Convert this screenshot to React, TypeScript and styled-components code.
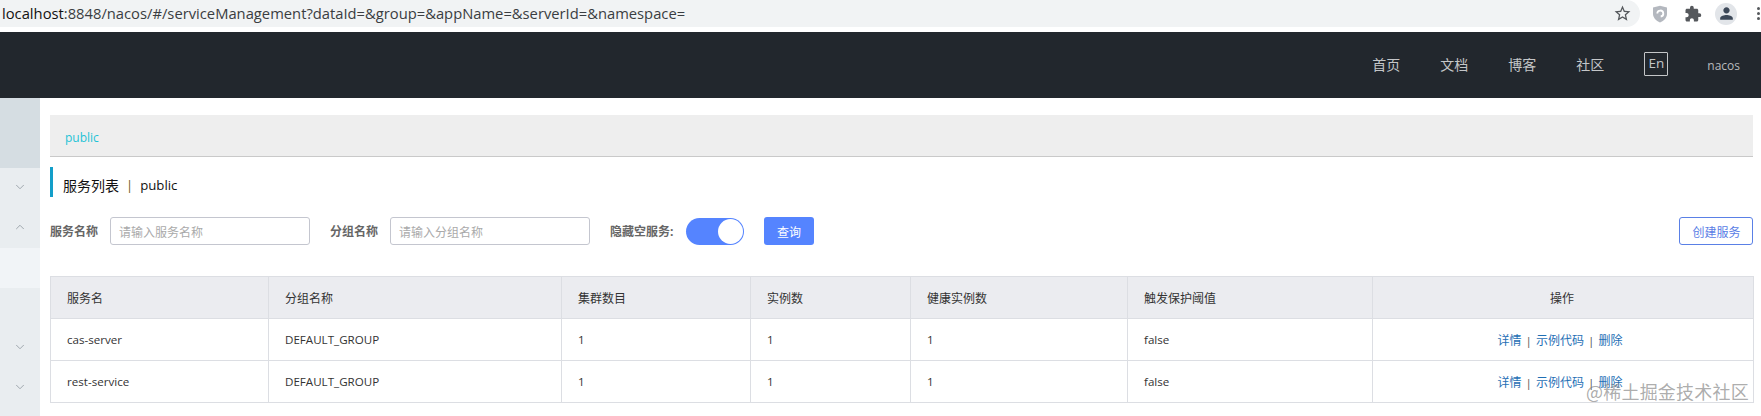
import React from 'react';
import styled, { createGlobalStyle } from 'styled-components';
import { ChevronDown, ChevronUp } from 'lucide-react';
import { MdExtension, MdPerson, MdStarBorder } from 'react-icons/md';

const GlobalStyle = createGlobalStyle`
  html, body {
    margin: 0;
    padding: 0;
    background: #fff;
    overflow: hidden;
    font-family: "Open Sans", "Noto Sans CJK SC", sans-serif;
  }
  * { box-sizing: border-box; }
`;

const Page = styled.div`
  width: 1761px;
  height: 416px;
  position: relative;
  overflow: hidden;
`;

/* browser chrome */
const BrowserBar = styled.div`
  height: 32px;
  display: flex;
  align-items: flex-start;
  background: #fff;
`;

const UrlPill = styled.div`
  width: 1640px;
  height: 27px;
  flex: none;
  display: flex;
  align-items: center;
  justify-content: space-between;
  padding: 0 8px 0 2px;
  background: #f1f3f4;
  border-radius: 0 14px 14px 0;
`;

const UrlText = styled.span`
  font-size: 14.75px;
  line-height: 27px;
  color: #3a3d41;
  white-space: nowrap;
`;

const UrlHost = styled.span`
  color: #111;
`;

const BrowserIcons = styled.div`
  flex: 1;
  height: 27px;
  display: flex;
  align-items: center;
  color: #55585c;
  padding-left: 12px;
  gap: 16px;
`;

const Avatar = styled.div`
  width: 22px;
  height: 22px;
  margin-left: -3px;
  border-radius: 50%;
  background: #e2e5e9;
  color: #3c4858;
  display: flex;
  align-items: center;
  justify-content: center;
`;

const Kebab = styled.div`
  display: flex;
  flex-direction: column;
  gap: 2px;
  margin-left: 4px;
  span {
    width: 3px;
    height: 3px;
    border-radius: 50%;
    background: #55585c;
  }
`;

/* nacos header */
const Header = styled.header`
  height: 66px;
  background: #22272d;
  display: flex;
  align-items: center;
  justify-content: flex-end;
  padding-right: 21px;
  color: #c4c6c8;
`;

const NavLink = styled.a`
  font-size: 14px;
  margin-right: 40px;
  line-height: 20px;
`;

const LangBox = styled.div`
  width: 24px;
  height: 24px;
  margin: -2px 39px 0 0;
  border: 1px solid #c4c6c8;
  border-radius: 1px;
  font-size: 13.5px;
  line-height: 20px;
  text-align: center;
`;

const UserName = styled.span`
  font-size: 12px;
  font-weight: 400;
  color: #b8babd;
`;

const Body = styled.div`
  display: flex;
  height: 318px;
`;

const Sidebar = styled.aside`
  width: 40px;
  flex: none;
  display: flex;
  flex-direction: column;
  background: #e9edf0;
`;

const SideTop = styled.div`
  height: 70px;
  background: #d5dde2;
`;

const SideRow = styled.div<{ $light?: boolean }>`
  height: 40px;
  display: flex;
  align-items: center;
  justify-content: center;
  padding-bottom: 2px;
  color: #8f989f;
  background: ${(p) => (p.$light ? '#f1f4f7' : 'transparent')};
`;

const Main = styled.main`
  flex: 1;
  min-width: 0;
  padding: 17px 8px 0 10px;
`;

const Crumb = styled.div`
  height: 42px;
  padding: 7px 0 0 15px;
  background: #eee;
  border-bottom: 1px solid #c9c9c9;
  font-size: 12px;
  line-height: 32px;
  color: #1fc3d6;
`;

const Title = styled.div`
  height: 30px;
  margin-top: 10px;
  padding: 5px 0 0 10px;
  border-left: 3px solid #139ec9;
  display: flex;
  align-items: center;
  gap: 7px;
  font-size: 14px;
  color: #111;
`;

const TitlePublic = styled.span`
  font-size: 13.2px;
`;

const TitleSep = styled.span`
  color: #6e5a1e;
  font-size: 13px;
`;

const FilterRow = styled.div`
  height: 28px;
  margin-top: 20px;
  display: flex;
  align-items: center;
`;

const FilterLabel = styled.label<{ $width: number }>`
  width: ${(p) => p.$width}px;
  flex: none;
  font-size: 12px;
  font-weight: 700;
  color: #666;
  white-space: nowrap;
`;

const FilterInput = styled.input<{ $gap: number }>`
  width: 200px;
  height: 28px;
  flex: none;
  margin-right: ${(p) => p.$gap}px;
  padding: 0 8px;
  border: 1px solid #c4c6cf;
  border-radius: 3px;
  background: #fff;
  outline: none;
  font: 12px "Noto Sans CJK SC", sans-serif;
  &::placeholder { color: #aaa; }
`;

const Switch = styled.div`
  width: 58px;
  height: 27px;
  flex: none;
  display: flex;
  justify-content: flex-end;
  border-radius: 14px;
  background: #5584ff;
  padding: 1px;
`;

const SwitchKnob = styled.span`
  width: 25px;
  height: 25px;
  border-radius: 50%;
  background: #fff;
`;

const SearchButton = styled.button`
  width: 50px;
  height: 28px;
  margin-left: 20px;
  border: 0;
  border-radius: 3px;
  background: #5584ff;
  color: #fff;
  font: 12px "Noto Sans CJK SC", sans-serif;
`;

const CreateButton = styled.button`
  width: 74px;
  height: 28px;
  margin-left: auto;
  padding: 0 0 0 1px;
  border: 1px solid #5a80e6;
  border-radius: 3px;
  background: #fff;
  color: #5a80e6;
  font: 12px "Noto Sans CJK SC", sans-serif;
`;

const Table = styled.table`
  width: 1703px;
  margin-top: 31px;
  border-collapse: collapse;
  table-layout: fixed;
  font-size: 11.6px;
  color: #333;
`;

const Th = styled.th<{ $center?: boolean }>`
  height: 42px;
  padding: 0 ${(p) => (p.$center ? '18px' : '16px')} 0 16px;
  border: 1px solid #dcdee3;
  background: #ebecf0;
  font-size: 12px;
  font-weight: 400;
  text-align: ${(p) => (p.$center ? 'center' : 'left')};
`;

const Td = styled.td<{ $center?: boolean }>`
  height: 42px;
  padding: 0 ${(p) => (p.$center ? '22px' : '16px')} 0 16px;
  border: 1px solid #dcdee3;
  text-align: ${(p) => (p.$center ? 'center' : 'left')};
`;

const ActionLink = styled.a`
  font-size: 12px;
  color: #1f6fb5;
`;

const ActionSep = styled.span`
  margin: 0 4px;
  color: #555;
`;

const Watermark = styled.div`
  position: absolute;
  left: 1586px;
  top: 380px;
  font-size: 18px;
  line-height: 22px;
  letter-spacing: 0.2px;
  color: rgba(120, 120, 120, 0.62);
  font-family: "Noto Sans CJK SC", sans-serif;
  white-space: nowrap;
`;

const columns = [218, 293, 189, 160, 217, 245, 381];
const headings = ['服务名', '分组名称', '集群数目', '实例数', '健康实例数', '触发保护阈值'];
const services = ['cas-server', 'rest-service'];

const ShieldIcon = () => (
  <svg width="16" height="18" viewBox="0 0 16 18">
    <path d="M1 2.5 8 .8l7 1.7v6.3c0 4-3 7-7 8.6-4-1.6-7-4.6-7-8.6z" fill="#b4b8bf" />
    <path d="M5.3 8.5a3 3 0 1 1 3.4 3" fill="none" stroke="#fff" strokeWidth="1.8" />
  </svg>
);

const App = () => {
  return (
    <Page>
      <GlobalStyle />
      <BrowserBar>
        <UrlPill>
          <UrlText>
            <UrlHost>localhost</UrlHost>:8848/nacos/#/serviceManagement?dataId=&amp;group=&amp;appName=&amp;serverId=&amp;namespace=
          </UrlText>
          <MdStarBorder size={19} color="#55585c" />
        </UrlPill>
        <BrowserIcons>
          <ShieldIcon />
          <MdExtension size={18} />
          <Avatar>
            <MdPerson size={19} />
          </Avatar>
          <Kebab>
            <span />
            <span />
            <span />
          </Kebab>
        </BrowserIcons>
      </BrowserBar>
      <Header>
        <NavLink>首页</NavLink>
        <NavLink>文档</NavLink>
        <NavLink>博客</NavLink>
        <NavLink>社区</NavLink>
        <LangBox>En</LangBox>
        <UserName>nacos</UserName>
      </Header>
      <Body>
        <Sidebar>
          <SideTop />
          <SideRow><ChevronDown size={14} strokeWidth={1.4} /></SideRow>
          <SideRow><ChevronUp size={14} strokeWidth={1.4} /></SideRow>
          <SideRow $light />
          <SideRow />
          <SideRow><ChevronDown size={14} strokeWidth={1.4} /></SideRow>
          <SideRow><ChevronDown size={14} strokeWidth={1.4} /></SideRow>
        </Sidebar>
        <Main>
          <Crumb>public</Crumb>
          <Title>
            服务列表 <TitleSep>|</TitleSep> <TitlePublic>public</TitlePublic>
          </Title>
          <FilterRow>
            <FilterLabel $width={60}>服务名称</FilterLabel>
            <FilterInput $gap={20} placeholder="请输入服务名称" />
            <FilterLabel $width={60}>分组名称</FilterLabel>
            <FilterInput $gap={20} placeholder="请输入分组名称" />
            <FilterLabel $width={76}>隐藏空服务:</FilterLabel>
            <Switch>
              <SwitchKnob />
            </Switch>
            <SearchButton>查询</SearchButton>
            <CreateButton>创建服务</CreateButton>
          </FilterRow>
          <Table>
            <colgroup>
              {columns.map((width) => (
                <col key={width} width={width} />
              ))}
            </colgroup>
            <thead>
              <tr>
                {headings.map((heading) => (
                  <Th key={heading}>{heading}</Th>
                ))}
                <Th $center>操作</Th>
              </tr>
            </thead>
            <tbody>
              {services.map((service) => (
                <tr key={service}>
                  <Td>{service}</Td>
                  <Td>DEFAULT_GROUP</Td>
                  <Td>1</Td>
                  <Td>1</Td>
                  <Td>1</Td>
                  <Td>false</Td>
                  <Td $center>
                    <ActionLink>详情</ActionLink>
                    <ActionSep>|</ActionSep>
                    <ActionLink>示例代码</ActionLink>
                    <ActionSep>|</ActionSep>
                    <ActionLink>删除</ActionLink>
                  </Td>
                </tr>
              ))}
            </tbody>
          </Table>
        </Main>
      </Body>
      <Watermark>@稀土掘金技术社区</Watermark>
    </Page>
  );
};

export default App;
